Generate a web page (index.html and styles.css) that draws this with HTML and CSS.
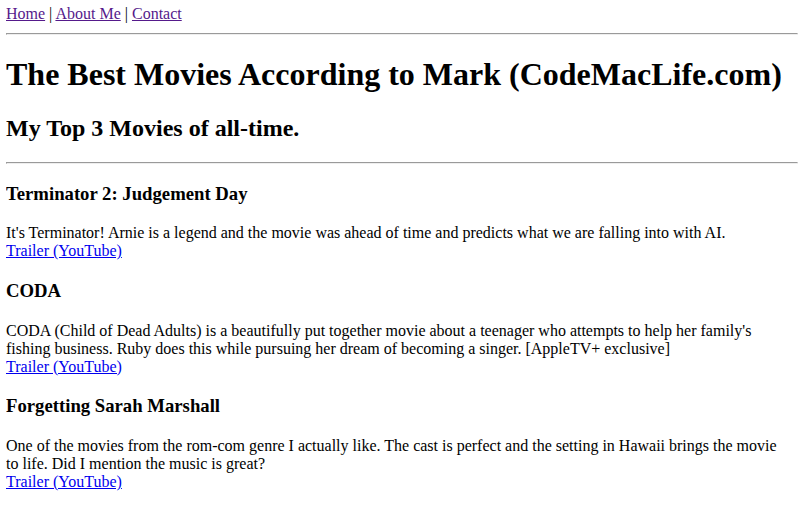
FILE: index.html
```html
<!DOCTYPE html>
<html lang="en">
  <head>
    <meta charset="UTF-8" />
    <title>The Best Movies According to Mark</title>
    <link rel="stylesheet" href="styles.css">
  </head>
  <body>
    <nav class="nav">
      <a class="visited" href="#home">Home</a> | <a class="visited" href="#about">About Me</a> | <a class="visited" href="#contact">Contact</a>
    </nav>
    <hr />
    <h1>The Best Movies According to Mark (CodeMacLife.com)</h1>
    <h2>My Top 3 Movies of all-time.</h2>
    <hr />

    <h3>Terminator 2: Judgement Day</h3>
    <p>
      It's Terminator! Arnie is a legend and the movie was ahead of time and predicts what we are falling into with AI.<br />
      <a href="#t2">Trailer (YouTube)</a>
    </p>

    <h3>CODA</h3>
    <p>
      CODA (Child of Dead Adults) is a beautifully put together movie about a teenager who attempts to help her family's fishing business. Ruby does this while pursuing her dream of becoming a singer. [AppleTV+ exclusive]<br />
      <a href="#coda">Trailer (YouTube)</a>
    </p>

    <h3>Forgetting Sarah Marshall</h3>
    <p>
      One of the movies from the rom-com genre I actually like. The cast is perfect and the setting in Hawaii brings the movie to life. Did I mention the music is great?<br />
      <a href="#fsm">Trailer (YouTube)</a>
    </p>
  </body>
</html>
```

FILE: styles.css
```css
body {
  font-family: "Liberation Serif", "Times New Roman", serif;
  font-size: 16px;
  color: #000;
  background-color: #fff;
  margin: 5px 2px 8px 6px;
}

.nav {
  padding-bottom: 2px;
}

p {
  margin: 19.7px 10px 19.7px 0;
}

a {
  color: #0000ee;
}

a.visited {
  color: #551a8b;
}
```
